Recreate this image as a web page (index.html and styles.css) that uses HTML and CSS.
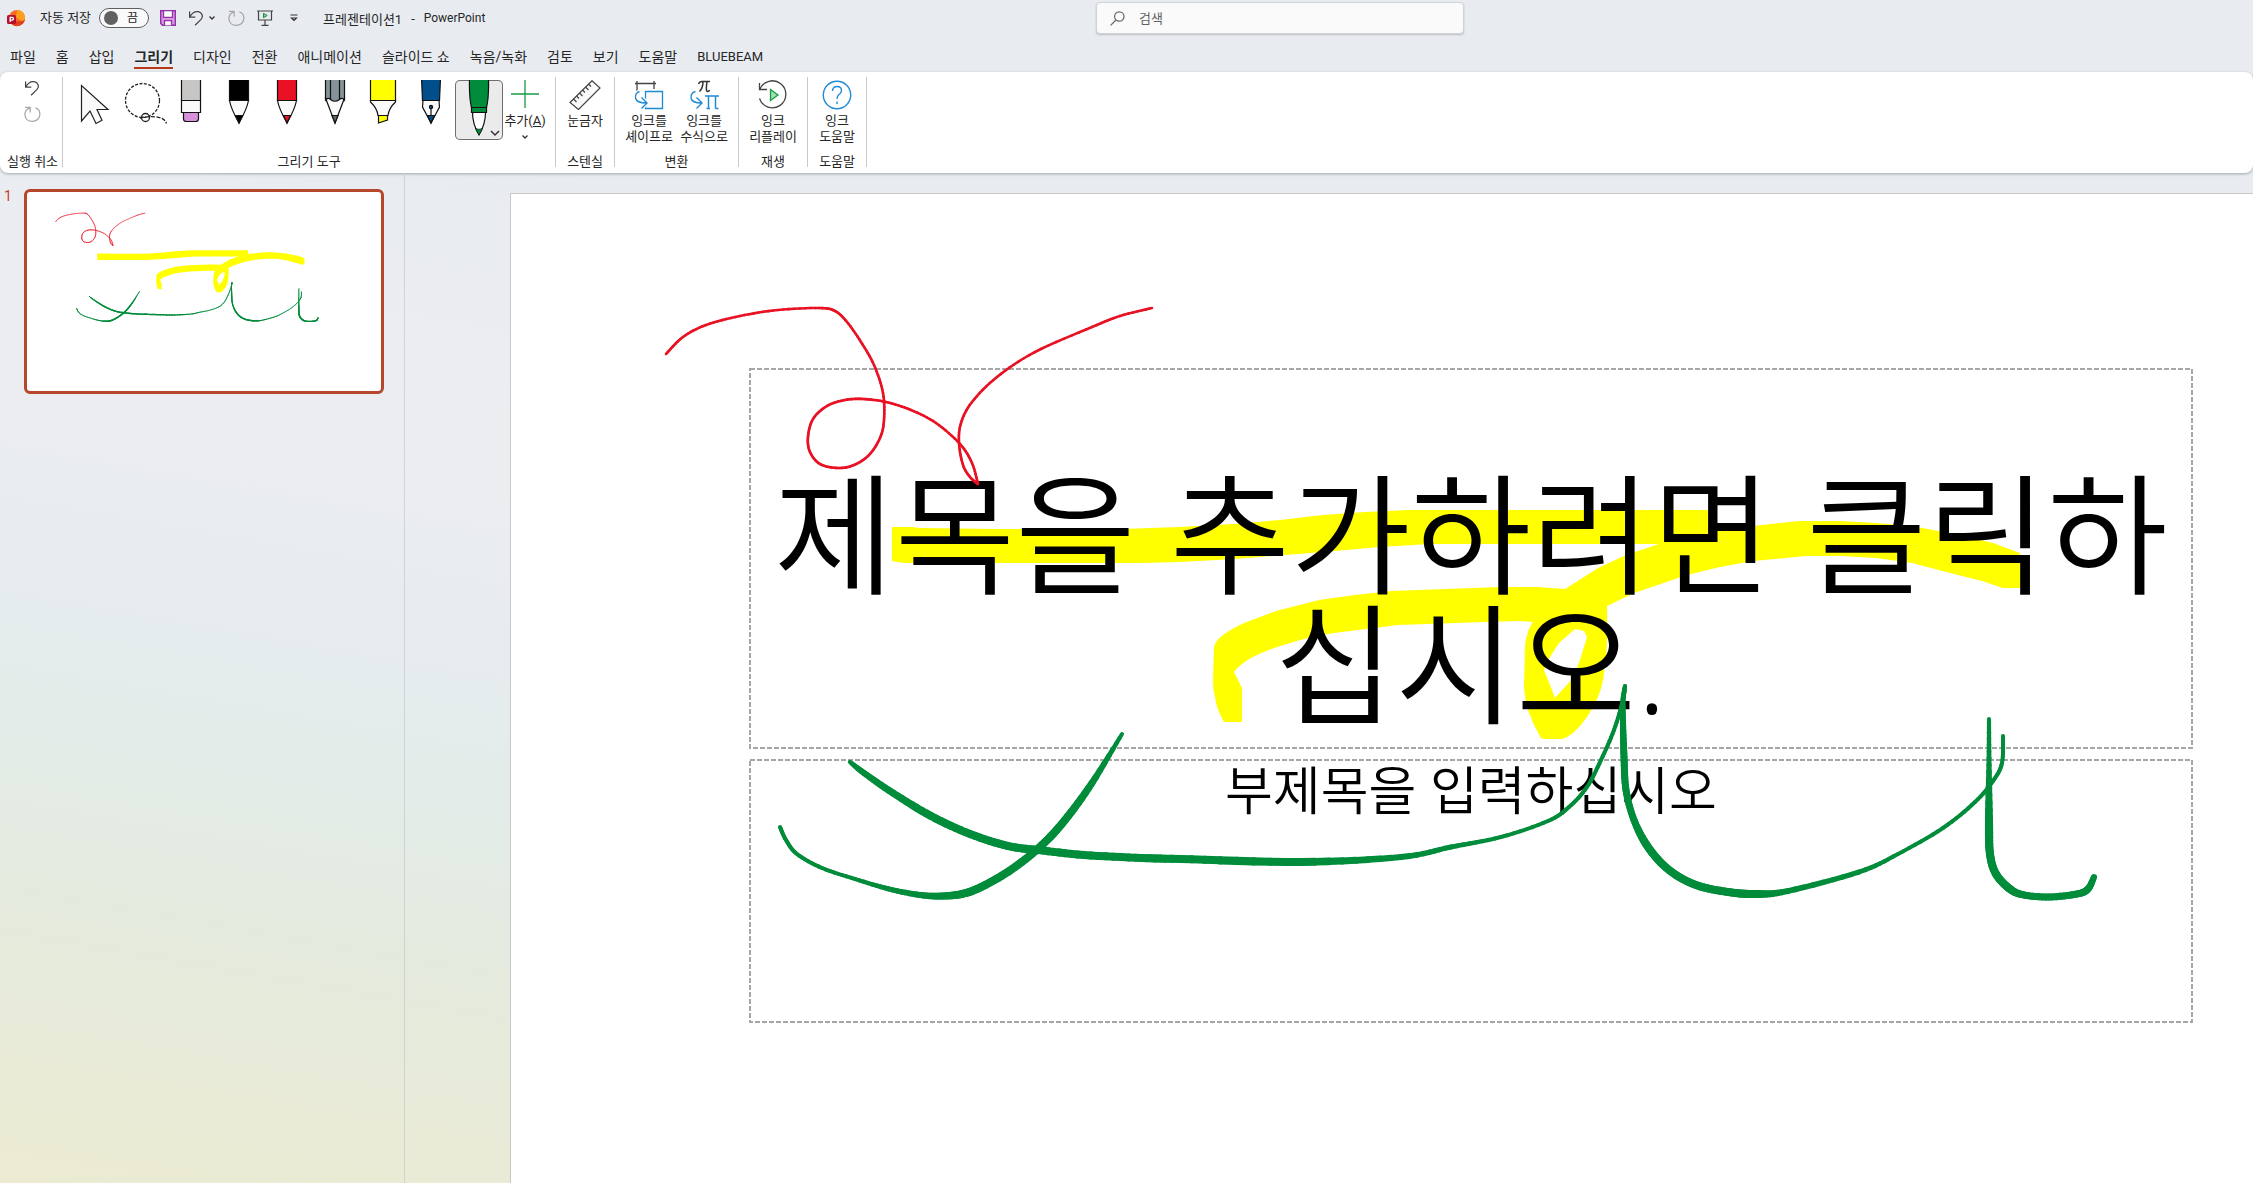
FILE: index.html
```html
<!DOCTYPE html>
<html lang="ko">
<head>
    <meta charset="UTF-8">
    <meta name="viewport" content="width=device-width, initial-scale=1.0">
    <title>프레젠테이션1 - PowerPoint</title>
    <link rel="stylesheet" href="styles.css">
</head>
<body>
    <!-- shared drawings: slide ink and repeated icons -->
    <svg class="defs" width="0" height="0" aria-hidden="true">
        <defs>
            <g id="marker-ink" fill="#ffff00">
                <path d="M892 527H913L919 528L997 529H1122L1180 527L1234 524L1280 520L1323 515L1365 512L1409 510H1713V544H1430L1380 547L1323 552L1234 559L1180 562L1140 563H904L892 561Z"/>
                <path fill-rule="evenodd" d="M1224 722H1242V688L1237 678L1234 672Q1239 665 1251 658Q1266 650 1287 644Q1308 637 1334 633L1398 625L1484 622L1519 621L1533 622Q1529 628 1528 632Q1525 640 1525 647L1524 687Q1525 700 1528 710L1534 725L1541 738L1544 739H1562Q1568 737 1573 733Q1581 726 1587 717Q1594 706 1598 697Q1603 684 1604 673Q1607 657 1607 640V606L1634 593L1687 575L1720 567L1753 561L1806 556H1841L1876 558L1912 563L1954 574L1982 581L2003 588H2020V553L1993 543L1954 534L1912 526L1876 523L1841 521H1799L1753 526L1700 532L1659 544L1626 555L1598 568L1584 577L1565 589L1537 587H1501L1391 591L1355 595L1319 600L1276 611L1244 623Q1231 629 1223 635Q1216 640 1214 647L1213 680Q1213 690 1215 697Q1216 705 1219 712ZM1575 629L1584 631L1587 637L1580 660L1573 678L1555 698L1550 685L1544 670L1550 657L1559 643Z"/>
            </g>
            <g id="pen-ink" fill="none" stroke-linecap="round"></g>
            <g id="icon-undo" fill="none" stroke="#444" stroke-width="1.3">
                <path d="M1.7 1.5V7.5H7.7M2 7.2C4.5 2.5 8 1.2 11 1.8C15 2.6 16.5 7 13.8 10L7.5 16.2"/>
            </g>
            <g id="icon-redo" fill="none" stroke="#a6a6a6" stroke-width="1.3">
                <path d="M1 1.5H6.5V7M6.3 2C2 3.5 .8 6.5 1 9.500C1.500 14 5 16.300 9 16.300C13 16.300 16.500 13.500 16.800 9C17 6 15 3 12 1.900"/>
            </g>
        </defs>
    </svg>

    <header class="titlebar">
        <div class="quick-access">
            <svg class="logo" viewBox="0 0 18 18" width="18" height="18">
                <circle cx="10" cy="9" r="8" fill="#f36c21"/>
                <path d="M10 1A8 8 0 0 1 18 9C18 12 16 13 14 12L9 8Z" fill="#ff9f1c"/>
                <path d="M3 13L14 12C17 12 18 10 18 9A8 8 0 0 1 3.500 13.700Z" fill="#e0401f"/>
                <rect x="0" y="6" width="9" height="9" rx="1.500" fill="#b3122a"/>
                <path d="M3.200 13V8.300H5A1.400 1.400 0 0 1 5 11.200H3.500" fill="none" stroke="#fff" stroke-width="1.300"/>
            </svg>
            <label class="autosave" for="autosave">자동 저장</label>
            <span class="switch">
                <input type="checkbox" id="autosave">
                <span class="switch-text">끔</span>
            </span>
            <button class="qa-btn save" aria-label="저장">
                <svg viewBox="0 0 16 16" width="16" height="16">
                    <path d="M.7.7H15.300V15.300H2.500L.7 13.500Z" fill="#d69ae0" stroke="#9430a8" stroke-width="1.400"/>
                    <path d="M3.500.7H12.500V7.300H3.500Z" fill="#fff" stroke="#9430a8" stroke-width="1.300"/>
                    <path d="M4.500 15.300V10.700H11.500V15.300" fill="#fff" stroke="#9430a8" stroke-width="1.300"/>
                </svg>
            </button>
            <button class="qa-btn undo" aria-label="실행 취소">
                <svg viewBox="0 0 18 18" width="17" height="17"><use href="#icon-undo"/></svg>
                <svg viewBox="0 0 8 6" width="8" height="6"><path d="M1.500 1.500L4 4L6.500 1.500" fill="none" stroke="#333" stroke-width="1.300"/></svg>
            </button>
            <button class="qa-btn" aria-label="다시 실행">
                <svg viewBox="0 0 18 18" width="17" height="17"><use href="#icon-redo"/></svg>
            </button>
            <button class="qa-btn" aria-label="처음부터 시작">
                <svg viewBox="0 0 16 16" width="16" height="16" fill="none" stroke="#444" stroke-width="1.200">
                    <path d="M0 1H16M1.500 1V10H14.500V1M8 10V15.400M4.500 15.400H11.500"/>
                    <path d="M6.500 3.300L10.200 5.500L6.500 7.700Z" fill="#8fd19e" stroke="#1a8a3a" stroke-width="1"/>
                </svg>
            </button>
            <button class="qa-btn more" aria-label="빠른 실행 도구 모음 사용자 지정">
                <svg viewBox="0 0 8 8" width="8" height="8" fill="none" stroke="#333" stroke-width="1.200"><path d="M.5 1H7.500M1.500 4L4 6.500L6.500 4Z"/></svg>
            </button>
            <div class="doc-title"><span>프레젠테이션1</span><span>-</span><span class="latin">PowerPoint</span></div>
        </div>
        <div class="search">
            <svg viewBox="0 0 15 15" width="15" height="15" fill="none" stroke="#666" stroke-width="1.200">
                <circle cx="9.300" cy="5.500" r="4.700"/><path d="M6 9L.6 14.400"/>
            </svg>
            <input type="text" id="search" placeholder="검색" aria-label="검색">
        </div>
    </header>

    <nav class="tabs">
        <a class="tab" href="#">파일</a>
        <a class="tab" href="#">홈</a>
        <a class="tab" href="#">삽입</a>
        <a class="tab active" href="#">그리기</a>
        <a class="tab" href="#">디자인</a>
        <a class="tab" href="#">전환</a>
        <a class="tab" href="#">애니메이션</a>
        <a class="tab" href="#">슬라이드 쇼</a>
        <a class="tab" href="#">녹음/녹화</a>
        <a class="tab" href="#">검토</a>
        <a class="tab" href="#">보기</a>
        <a class="tab" href="#">도움말</a>
        <a class="tab latin" href="#">BLUEBEAM</a>
    </nav>

    <section class="ribbon">
        <div class="group group-undo">
            <div class="stack">
                <button aria-label="실행 취소"><svg viewBox="0 0 18 18" width="17" height="17"><use href="#icon-undo"/></svg></button>
                <button aria-label="다시 실행"><svg viewBox="0 0 18 18" width="17" height="17"><use href="#icon-redo"/></svg></button>
            </div>
            <div class="group-name">실행 취소</div>
        </div>

        <div class="group group-tools">
            <div class="tools">
                <button class="pen" aria-label="선택">
                    <svg viewBox="0 0 48 60"><path d="M10.500 5.500V41L19 31L25 43.500L31 40.200L26 29.500H37Z" fill="#fafafa" stroke="#222" stroke-width="1.200"/></svg>
                </button>
                <button class="pen" aria-label="올가미 선택">
                    <svg viewBox="0 0 48 60" fill="none" stroke="#222" stroke-width="1.300">
                        <circle cx="23.500" cy="20.500" r="17" stroke-dasharray="3 1.500"/>
                        <circle cx="26.500" cy="37.500" r="4"/>
                        <path d="M21 38C29 36 45 35 47.500 43.500" stroke-dasharray="4 1.500"/>
                    </svg>
                </button>
                <button class="pen" aria-label="지우개">
                    <svg viewBox="0 0 48 60" stroke="#111" stroke-width="1.200">
                        <path d="M14.500-2V20.500H33.500V-2Z" fill="#c8c6c4"/>
                        <path d="M14.500 20.500H33.500V32.500H14.500Z" fill="#fafafa"/>
                        <path d="M16.500 32.500H31.500V39Q31.500 41.500 28.500 41.500H19.500Q16.500 41.500 16.500 39Z" fill="#d890dc"/>
                    </svg>
                </button>
                <button class="pen" aria-label="펜: 검정">
                    <svg viewBox="0 0 48 60" stroke="#111" stroke-width="1.200">
                        <path d="M14.500-2V20.500H33.500V-2Z" fill="#000"/>
                        <path d="M14.500 20.500H33.500Q32 29 24 43Q16 29 14.500 20.500Z" fill="#fafafa"/>
                        <path d="M20.500 35.500H27.500L24 43Z" fill="#000"/>
                    </svg>
                </button>
                <button class="pen" aria-label="펜: 빨강">
                    <svg viewBox="0 0 48 60" stroke="#111" stroke-width="1.200">
                        <path d="M14.500-2V20.500H33.500V-2Z" fill="#e81224"/>
                        <path d="M14.500 20.500H33.500Q32 29 24 43Q16 29 14.500 20.500Z" fill="#fafafa"/>
                        <path d="M20.500 35.500H27.500L24 43Z" fill="#e81224"/>
                    </svg>
                </button>
                <button class="pen" aria-label="연필">
                    <svg viewBox="0 0 48 60" stroke="#111" stroke-width="1.200">
                        <path d="M14.500 18L24 43L33.500 18Z" fill="#fafafa"/>
                        <path d="M14.500-2V20Q17 17 19.500 19.500Q24 23 28.500 19.500Q31 17 33.500 20V-2Z" fill="#849398"/>
                        <path d="M19.500-2V19M28.500-2V19"/>
                        <path d="M21 35.500H27L24 43Z" fill="#5c6a70"/>
                    </svg>
                </button>
                <button class="pen" aria-label="형광펜: 노랑">
                    <svg viewBox="0 0 48 60" stroke="#111" stroke-width="1.200">
                        <path d="M11.500 20.500H36.500V22Q30 28 29 35.500H19Q18 28 11.500 22Z" fill="#fafafa"/>
                        <path d="M11.500-2V20.500H36.500V-2Z" fill="#ffff00"/>
                        <path d="M19.500 35.500H28.500V40L19.500 43Z" fill="#ffff00"/>
                    </svg>
                </button>
                <button class="pen" aria-label="만년필">
                    <svg viewBox="0 0 48 60" stroke="#111" stroke-width="1.200">
                        <path d="M16 20.500H32L32.500 27L24 43L15.500 27Z" fill="#fafafa"/>
                        <path d="M14.500-2L15.500 20.500H32.500L33.500-2Z" fill="#004f8b"/>
                        <path d="M20.500 35.500H27.500L24 43Z" fill="#004f8b"/>
                        <path d="M24 27V36"/><circle cx="24" cy="27" r="1.600" fill="#004f8b"/>
                    </svg>
                </button>
                <button class="pen selected" aria-label="펜: 녹색">
                    <svg viewBox="0 0 48 60" stroke="#111" stroke-width="1.200">
                        <path d="M14.500-2Q14 18 16.500 27.500H31.500Q34 18 33.500-2Z" fill="#008c3a"/>
                        <path d="M16.500 27.500H31.500V32.500H16.500Z" fill="#008c3a"/>
                        <path d="M17.500 32.500H30.500Q30.500 44 24 55Q17.500 44 17.500 32.500Z" fill="#fff"/>
                        <path d="M20.500 48.500Q24 50 27.500 48.500L24 55Z" fill="#008c3a" stroke-width=".6"/>
                        <path d="M36 51L40 55L44 51" fill="none" stroke="#333" stroke-width="1.500"/>
                    </svg>
                </button>
                <button class="cmd add">
                    <svg viewBox="0 0 28 28" width="28" height="28"><path d="M14 0V28M0 14H28" stroke="#1a9a44" stroke-width="1.300"/></svg>
                    <span>추가(<u>A</u>)</span>
                    <svg class="drop" viewBox="0 0 8 6" width="8" height="6"><path d="M1.500 1.500L4 4L6.500 1.500" fill="none" stroke="#333" stroke-width="1.300"/></svg>
                </button>
            </div>
            <div class="group-name">그리기 도구</div>
        </div>

        <div class="group">
            <div class="tools">
                <button class="cmd">
                    <svg viewBox="0 0 32 30" width="32" height="30" fill="#fafafa" stroke="#444" stroke-width="1.200">
                        <path d="M1 22.500L23 0.700L31 8L9.500 29.500Z"/>
                        <path d="M4.500 19L7.500 22M7.500 16L10 18.500M10.500 13L13.500 16M13.500 10L16 12.500M16.500 7L19.500 10M19.500 4L22 6.500"/>
                    </svg>
                    <span>눈금자</span>
                </button>
            </div>
            <div class="group-name">스텐실</div>
        </div>

        <div class="group group-convert">
            <div class="tools">
                <button class="cmd">
                    <svg viewBox="0 0 30 30" width="30" height="30" fill="none">
                        <path d="M1 3.500H22M3 1V11M20 1V9" stroke="#444" stroke-width="1.300"/>
                        <path d="M11.500 11.500H28.500V28.500H11.500Z" fill="#fafafa" stroke="#1e8bd4" stroke-width="1.300"/>
                        <path d="M5.500 11.500Q1 13 1.500 18Q2.500 23 12.500 23M7.500 17.500L13 23L7.500 28.500" stroke="#fff" stroke-width="4"/>
                        <path d="M5.500 11.500Q1 13 1.500 18Q2.500 23 12.500 23M7.500 17.500L13 23L7.500 28.500" stroke="#1e8bd4" stroke-width="1.400"/>
                    </svg>
                    <span>잉크를<br>셰이프로</span>
                </button>
                <button class="cmd">
                    <svg viewBox="0 0 30 30" width="30" height="30" fill="none">
                        <path d="M9.500 4Q10.500 1.500 13 1.500H21M14 1.500Q14 8 10.500 11.500M18 1.500Q16.500 11.500 18.500 11.500Q20 11.500 20.500 10" stroke="#333" stroke-width="1.500"/>
                        <path d="M16 16H30M19.500 16V28.500M26.500 16V28.500M17.500 28.500H21M26.500 28.500H29.500" stroke="#1e8bd4" stroke-width="1.500"/>
                        <path d="M6.500 11.500Q1.500 13 2 18Q3 23 12.500 23M7.500 17.500L13 23L7.500 28.500" stroke="#1e8bd4" stroke-width="1.400"/>
                    </svg>
                    <span>잉크를<br>수식으로</span>
                </button>
            </div>
            <div class="group-name">변환</div>
        </div>

        <div class="group">
            <div class="tools">
                <button class="cmd wide">
                    <svg viewBox="0 0 30 30" width="30" height="30" fill="none" stroke="#444" stroke-width="1.300">
                        <path d="M1.500 3V9.500H9M1.800 9.300A13.500 13.500 0 1 1 1.500 18.500"/>
                        <path d="M12.500 9.500L20 15L12.500 20.500Z" fill="#9fe0b0" stroke="#1a9a44"/>
                    </svg>
                    <span>잉크<br>리플레이</span>
                </button>
            </div>
            <div class="group-name">재생</div>
        </div>

        <div class="group">
            <div class="tools">
                <button class="cmd">
                    <svg viewBox="0 0 30 30" width="30" height="30" fill="none" stroke="#1e8bd4" stroke-width="1.400">
                        <circle cx="15" cy="15" r="13.700"/>
                        <path d="M10.500 11Q10.500 6.500 15 6.500Q19.500 6.500 19.500 10.500Q19.500 13 17 14.500Q15 16 15 19M15 21.500V24"/>
                    </svg>
                    <span>잉크<br>도움말</span>
                </button>
            </div>
            <div class="group-name">도움말</div>
        </div>
    </section>

    <main class="workspace">
        <aside class="slides">
            <span class="slide-no">1</span>
            <button class="thumb" aria-label="슬라이드 1">
                <svg viewBox="510 193 1926 1084"><use href="#marker-ink"/><use href="#pen-ink"/></svg>
            </button>
        </aside>
        <section class="canvas">
            <article class="slide">
                <svg class="ink" viewBox="510 193 1926 1084"><use href="#marker-ink"/></svg>
                <div class="placeholder title-box">
                    <svg class="frame"><rect width="100%" height="100%"/></svg>
                    <h1>제목을 추가하려면 클릭하<br>십시오.</h1>
                </div>
                <div class="placeholder subtitle-box">
                    <svg class="frame"><rect width="100%" height="100%"/></svg>
                    <p>부제목을 입력하십시오</p>
                </div>
                <svg class="ink" viewBox="510 193 1926 1084"><use href="#pen-ink"/></svg>
            </article>
        </section>
    </main>

    <script src="ink.js"></script>
</body>
</html>
```
FILE: styles.css
```css
* {
    box-sizing: border-box;
}
body {
    margin: 0;
    height: 100vh;
    display: flex;
    flex-direction: column;
    overflow: hidden;
    font-family: Roboto, "Noto Sans CJK KR", sans-serif;
    font-size: 13px;
    color: #262626;
    background: linear-gradient(190deg, #e8ecf0 0%, #e8ecf1 30%, #ecedf1 48%, #e7ecf0 60%, #e3ece9 70%, #e4eadd 82%, #ecebd2 100%);
}
button {
    font: inherit;
    color: inherit;
    background: none;
    border: none;
    padding: 0;
}
svg {
    display: block;
    flex: none;
}
.defs {
    position: absolute;
}

/* title bar */
.titlebar {
    display: grid;
    grid-template-columns: 1096px 368px 1fr;
    align-items: center;
    height: 36px;
}
.quick-access {
    display: flex;
    align-items: center;
    padding-left: 7px;
}
.autosave {
    margin-left: 15px;
    line-height: 20px;
}
.switch {
    display: flex;
    align-items: center;
    width: 50px;
    height: 20px;
    margin: 0 11px 0 8px;
    padding: 0 10px 0 4px;
    border: 1px solid #5f5f5f;
    border-radius: 10px;
    background: #fafafa;
    justify-content: space-between;
}
.switch input {
    appearance: none;
    width: 14px;
    height: 14px;
    margin: 0;
    border-radius: 50%;
    background: #616161;
}
.switch-text {
    font-size: 12px;
    line-height: 18px;
}
.qa-btn {
    display: flex;
    align-items: center;
    gap: 3px;
    margin-right: 12px;
}
.qa-btn.more {
    margin: 0 25px 0 5px;
}
.doc-title {
    display: flex;
    align-items: center;
    gap: 9px;
}
.latin {
    font-size: 12px;
}
.search {
    display: flex;
    align-items: center;
    gap: 14px;
    height: 32px;
    padding: 0 13px;
    background: #fafafa;
    border: 1px solid #d0d3d6;
    border-radius: 4px;
    box-shadow: 0 1px 2px rgba(0, 0, 0, 0.2);
}
.search input {
    flex: 1;
    border: none;
    outline: none;
    background: none;
    padding: 0;
    font: inherit;
}
.search input::placeholder {
    color: #616161;
}

/* tabs */
.tabs {
    display: flex;
    align-items: flex-end;
    gap: 20px;
    height: 36px;
    padding: 0 10px 3px;
    font-size: 14px;
}
.tab {
    color: inherit;
    text-decoration: none;
    line-height: 20px;
    border-bottom: 2px solid transparent;
}
.tab.active {
    font-weight: bold;
    border-bottom-color: #b7391a;
}
.tab.latin {
    font-size: 13px;
}

/* ribbon */
.ribbon {
    display: flex;
    height: 101px;
    flex: none;
    padding: 5px 0 6px;
    background: #fff;
    border-radius: 8px;
    box-shadow: 0 1px 3px rgba(0, 0, 0, 0.3);
}
.group {
    display: flex;
    flex-direction: column;
    justify-content: space-between;
    align-items: center;
    padding: 3px 4px 0;
    border-right: 1px solid #c8c8c8;
}
.group-undo {
    padding: 3px 4px 0 7px;
}
.group-tools {
    padding: 3px 8px 0;
}
.group-convert {
    padding: 3px 9px 0;
}
.group-name {
    line-height: 18px;
    margin-bottom: -4px;
    white-space: nowrap;
}
.stack {
    display: flex;
    flex-direction: column;
    gap: 9px;
}
.tools {
    display: flex;
}
.pen {
    width: 48px;
    height: 60px;
    overflow: hidden;
}
.pen.selected {
    background: #ebebeb;
    border-radius: 5px;
    box-shadow: inset 0 0 0 1px #6e6e6e;
}
.cmd {
    display: flex;
    flex-direction: column;
    align-items: center;
    min-width: 50px;
    gap: 3px;
    line-height: 16px;
}
.cmd.add {
    min-width: 44px;
    gap: 5px;
}
.cmd.wide {
    min-width: 60px;
}
.cmd + .cmd {
    margin-left: 5px;
}

/* slide list and canvas */
.workspace {
    flex: 1;
    display: grid;
    grid-template-columns: 405px 1fr;
    min-height: 0;
}
.slides {
    display: flex;
    align-items: flex-start;
    padding: 16px 20px 0 4px;
    border-right: 1px solid #d0d3d6;
}
.slide-no {
    width: 20px;
    flex: none;
    line-height: 14px;
    font-size: 14px;
    color: #c8401f;
}
.thumb {
    flex: 1;
    background: #fff;
    border: 3px solid #b7472a;
    border-radius: 6px;
    overflow: hidden;
}
.canvas {
    overflow: hidden;
    padding: 20px 0 0 105px;
}
.slide {
    position: relative;
    width: 1926px;
    aspect-ratio: 16 / 9;
    padding: 175px 0 0 239px;
    background: #fff;
    border: 1px solid #c8c8c8;
    color: #000;
    font-family: "Open Sans", "Noto Sans CJK KR", sans-serif;
}
.ink {
    position: absolute;
    inset: -1px;
    pointer-events: none;
}
.placeholder {
    position: relative;
    width: 1442px;
    text-align: center;
}
.frame {
    position: absolute;
    inset: 0;
    width: 100%;
    height: 100%;
    overflow: visible;
    fill: none;
    stroke: #a6a6a6;
    stroke-width: 2px;
    stroke-dasharray: 5 2;
}
.title-box {
    display: flex;
    align-items: flex-end;
    justify-content: center;
    height: 379px;
    padding-bottom: 20px;
    margin-bottom: 12px;
}
.title-box h1 {
    margin: 0;
    font-size: 131px;
    line-height: 130px;
    font-weight: 350;
    white-space: nowrap;
}
.subtitle-box {
    height: 262px;
}
.subtitle-box p {
    margin: 0;
    font-size: 52px;
    line-height: 60px;
    font-weight: 350;
}
```
FILE: ink.js
```js
// each point: x, y, pen width
const strokes = [
    { color: '#e81224', points: [
        [666, 354, 2.6], [683, 337, 2.6], [706, 325, 2.6], [740, 316, 2.6], [778, 310, 2.6], [819, 308, 2.6],
        [835, 311, 2.6], [847, 322, 2.6], [861, 342, 2.6], [874, 365, 2.6], [883, 393, 2.6], [884, 420, 2.6],
        [880, 438, 2.6], [869, 455, 2.6], [854, 465, 2.6], [838, 468, 2.6], [820, 464, 2.6], [810, 452, 2.6],
        [808, 437, 2.6], [813, 419, 2.6], [827, 406, 2.6], [845, 400, 2.6], [863, 399, 2.6], [886, 402, 2.6],
        [911, 410, 2.6], [936, 423, 2.6], [960, 444, 2.6], [972, 463, 2.6], [978, 484, 2.6]
    ] },
    { color: '#e81224', points: [
        [978, 484, 2.6], [970, 477, 2.6], [963, 465, 2.6], [959, 443, 2.6], [961, 423, 2.6], [972, 402, 2.6],
        [997, 377, 2.6], [1035, 352, 2.6], [1092, 327, 2.6], [1120, 316, 2.6], [1152, 308, 2.6]
    ] },
    { color: '#008c3a', points: [
        [780, 827, 4], [786, 840, 4], [797, 854, 4], [822, 868, 4], [855, 879, 4], [889, 889, 5], [920, 895, 6],
        [943, 896, 7], [966, 893, 8], [989, 883, 8], [1015, 867, 8], [1042, 845, 8], [1065, 820, 8],
        [1092, 783, 7], [1122, 734, 4]
    ] },
    { color: '#008c3a', points: [
        [850, 762, 4], [864, 773, 6], [893, 793, 7], [931, 816, 8], [970, 834, 8], [1008, 846, 8], [1038, 850, 8],
        [1084, 855, 8], [1142, 858, 8], [1180, 859, 8], [1301, 862, 8], [1401, 857, 6], [1451, 847, 5],
        [1501, 837, 4], [1548, 821, 4], [1569, 807, 4], [1587, 787, 4], [1601, 760, 4], [1614, 730, 4],
        [1623, 700, 4], [1625, 686, 4]
    ] },
    { color: '#008c3a', points: [
        [1625, 686, 4], [1623, 700, 5], [1623, 723, 6], [1624, 757, 7], [1626, 790, 7], [1634, 820, 7],
        [1648, 847, 8], [1669, 870, 8], [1696, 885, 8], [1728, 892, 8], [1756, 894, 8], [1788, 891, 6],
        [1859, 872, 5], [1898, 854, 4], [1943, 828, 4], [1975, 802, 4], [1993, 781, 4], [2002, 763, 4],
        [2003, 736, 4]
    ] },
    { color: '#008c3a', points: [
        [1989, 719, 4], [1989, 765, 5], [1989, 823, 8], [1990, 854, 8], [1996, 874, 8], [2010, 889, 8],
        [2024, 895, 7], [2049, 897, 7], [2077, 894, 7], [2088, 889, 7], [2094, 877, 6]
    ] }
];

const STEPS = 8;

function curve(a, b, c, d, t) {
    return 0.5 * (2 * b + (c - a) * t + (2 * a - 5 * b + 4 * c - d) * t * t + (3 * b - a - 3 * c + d) * t * t * t);
}

function drawStroke(layer, stroke) {
    const pts = stroke.points;
    let last = pts[0];
    for (let i = 0; i < pts.length - 1; i++) {
        const p0 = pts[Math.max(i - 1, 0)];
        const p3 = pts[Math.min(i + 2, pts.length - 1)];
        for (let s = 1; s <= STEPS; s++) {
            const next = [0, 1, 2].map(k => curve(p0[k], pts[i][k], pts[i + 1][k], p3[k], s / STEPS));
            const line = document.createElementNS('http://www.w3.org/2000/svg', 'path');
            line.setAttribute('d', `M${last[0]} ${last[1]}L${next[0]} ${next[1]}`);
            line.setAttribute('stroke', stroke.color);
            line.setAttribute('stroke-width', next[2]);
            layer.appendChild(line);
            last = next;
        }
    }
}

const layer = document.getElementById('pen-ink');
strokes.forEach(stroke => drawStroke(layer, stroke));
```
